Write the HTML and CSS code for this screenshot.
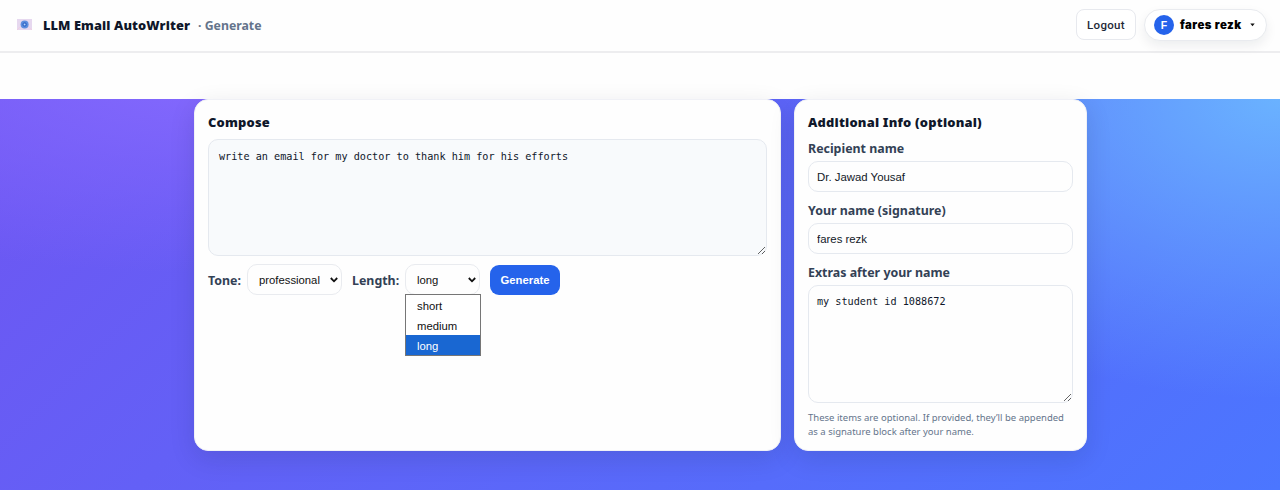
FILE: index.html
```html
<!DOCTYPE html>
<html lang="en">
<head>
<meta charset="utf-8">
<title>LLM Email AutoWriter</title>
<link rel="stylesheet" href="styles.css">
</head>
<body>
<header class="topbar">
  <svg class="logo" width="15" height="11" viewBox="0 0 15 11">
    <rect width="15" height="11" fill="#e6d8ef"/>
    <path d="M0 11L5 6M15 11L10 6" stroke="#efcfe3" stroke-width="1"/>
    <circle cx="7.6" cy="5.5" r="4" fill="#5d8fdf"/>
    <circle cx="7.6" cy="5.5" r="1.8" fill="none" stroke="#2f62c4" stroke-width="1"/>
    <circle cx="7.6" cy="5.5" r=".7" fill="#b8d4f8"/>
  </svg>
  <span class="brand">LLM Email AutoWriter</span>
  <span class="crumb">· Generate</span>
  <div class="account">
    <button class="logout">Logout</button>
    <div class="user">
      <span class="avatar">F</span>
      <span class="username">fares rezk</span>
      <svg class="caret" width="5" height="4" viewBox="0 0 5 4"><path d="M.3 .5H4.7L2.5 3.2Z" fill="#111"/></svg>
    </div>
  </div>
</header>
<main class="stage">
  <section class="card compose">
    <h2 class="heading">Compose</h2>
    <textarea class="field prompt">write an email for my doctor to thank him for his efforts</textarea>
    <div class="controls">
      <span class="label tone-label">Tone:</span>
      <div class="select tone">professional
        <svg class="chevron" width="8" height="6" viewBox="0 0 8 6"><path d="M.8 1L4 4.3L7.2 1" fill="none" stroke="#111" stroke-width="1.8"/></svg>
      </div>
      <span class="label length-label">Length:</span>
      <div class="select length">long
        <svg class="chevron" width="8" height="6" viewBox="0 0 8 6"><path d="M.8 1L4 4.3L7.2 1" fill="none" stroke="#111" stroke-width="1.8"/></svg>
        <div class="menu">
          <div class="option">short</div>
          <div class="option">medium</div>
          <div class="option selected">long</div>
        </div>
      </div>
      <button class="generate">Generate</button>
    </div>
  </section>
  <section class="card info">
    <h2 class="heading info-heading">Additional Info (optional)</h2>
    <label class="label">Recipient name</label>
    <input class="field text" value="Dr. Jawad Yousaf">
    <label class="label">Your name (signature)</label>
    <input class="field text" value="fares rezk">
    <label class="label">Extras after your name</label>
    <textarea class="field extras">my student id 1088672</textarea>
    <p class="hint">These items are optional. If provided, they’ll be appended<br>as a signature block after your name.</p>
  </section>
</main>
</body>
</html>
```
FILE: styles.css
```css
* { box-sizing: border-box; }
body {
  margin: 0;
  height: 490px;
  overflow: hidden;
  background: #fefefe;
  font-family: "Noto Sans", "Open Sans", sans-serif;
  color: #0f172a;
}
.topbar {
  height: 53px;
  padding: 0 13px 2px 17px;
  display: flex;
  align-items: center;
  border-bottom: 2px solid #ededef;
  background: #fefefe;
  white-space: nowrap;
}
.logo { display: block; margin-right: 11px; }
.brand { width: 155px; padding-top: 1px; font-size: 12.8px; font-weight: 900; letter-spacing: .1px; }
.crumb { padding-top: 1px; font-size: 12.3px; font-weight: 700; color: #64748b; }
.account { margin-left: auto; display: flex; align-items: center; gap: 8px; }
.logout {
  width: 60px;
  height: 31px;
  padding: 0;
  border: 1px solid #e7e9ee;
  border-radius: 8px;
  background: #fff;
  color: #1f2937;
  font: 500 11.5px Roboto, sans-serif;
  letter-spacing: .3px;
}
.user {
  width: 123px;
  height: 32px;
  padding: 0 11px 0 9px;
  display: flex;
  align-items: center;
  border: 1px solid #e9ebef;
  border-radius: 16px;
  background: #fff;
  box-shadow: 0 5px 12px rgba(15, 23, 42, .07);
}
.avatar {
  width: 20px;
  height: 20px;
  border-radius: 50%;
  background: #2563eb;
  color: #fff;
  font: 700 10.5px/20px "Liberation Sans", sans-serif;
  text-align: center;
}
.username { margin-left: 6px; color: #000; font: 900 11.4px Inter, sans-serif; letter-spacing: .5px; }
.caret { margin-left: auto; }
.stage {
  height: 391px;
  margin-top: 46px;
  padding: 0 193px 0 194px;
  display: grid;
  grid-template-columns: 587px 293px;
  grid-template-rows: 352px;
  column-gap: 13px;
  background:
    radial-gradient(ellipse 490px 300px at 100% 0, #6ab2ff 0, rgba(106, 178, 255, 0) 100%),
    radial-gradient(ellipse 560px 190px at 16% -4%, #8368fd 0, rgba(131, 104, 253, 0) 100%),
    linear-gradient(135deg, #6e56f2 0, #4b76ff 100%);
}
.card {
  padding: 13px 13px 0;
  display: flex;
  flex-direction: column;
  border: 1px solid #f0f1f6;
  border-radius: 14px;
  background: #fefefe;
  box-shadow: 0 8px 26px rgba(15, 23, 42, .12);
}
.heading { margin: 0; height: 26px; font-size: 12.9px; line-height: 19px; font-weight: 900; letter-spacing: .2px; white-space: nowrap; }
.label { color: #334155; font-size: 12.4px; line-height: 20px; height: 18px; font-weight: 700; white-space: nowrap; }
.field {
  display: block;
  width: 100%;
  margin: 0;
  border: 1px solid #e5e9ef;
  border-radius: 10px;
  background: #fefefe;
  color: #0f172a;
  outline: none;
}
.prompt { height: 117px; padding: 10px; background: #f8fafc; }
.prompt, .extras { font: 10.19px/14px "DejaVu Sans Mono", monospace; }
.text { height: 31px; padding: 0 8px; margin: 4px 0 9px; flex: none; font: 11.4px "Liberation Sans", sans-serif; color: #111827; }
.extras { height: 118px; margin-top: 4px; padding: 9px 8px; }
.hint { margin: 8px 0 0; color: #64748b; font-size: 9.5px; line-height: 13.5px; white-space: nowrap; }
.controls { display: flex; align-items: center; margin-top: 8px; }
.tone-label { width: 39px; }
.length-label { width: 53px; margin-left: 10px; }
.select {
  position: relative;
  height: 31px;
  padding: 0 3px 0 11px;
  display: flex;
  align-items: center;
  justify-content: space-between;
  border: 1px solid #e9ebef;
  border-radius: 10px;
  background: #fefefe;
  color: #111;
  font: 11.3px "Liberation Sans", sans-serif;
}
.tone { width: 95px; }
.length { width: 75px; }
.menu {
  position: absolute;
  top: 29px;
  left: -1px;
  width: 76px;
  border: 1px solid #767676;
  background: #fff;
}
.option { height: 20px; padding-left: 11px; line-height: 22px; }
.selected { background: #1967d2; color: #fff; }
.generate {
  width: 70px;
  height: 30px;
  margin-left: 10px;
  padding: 0;
  border: 0;
  border-radius: 9px;
  background: #2563eb;
  color: #fff;
  font: 700 11.3px "Liberation Sans", sans-serif;
}
```
